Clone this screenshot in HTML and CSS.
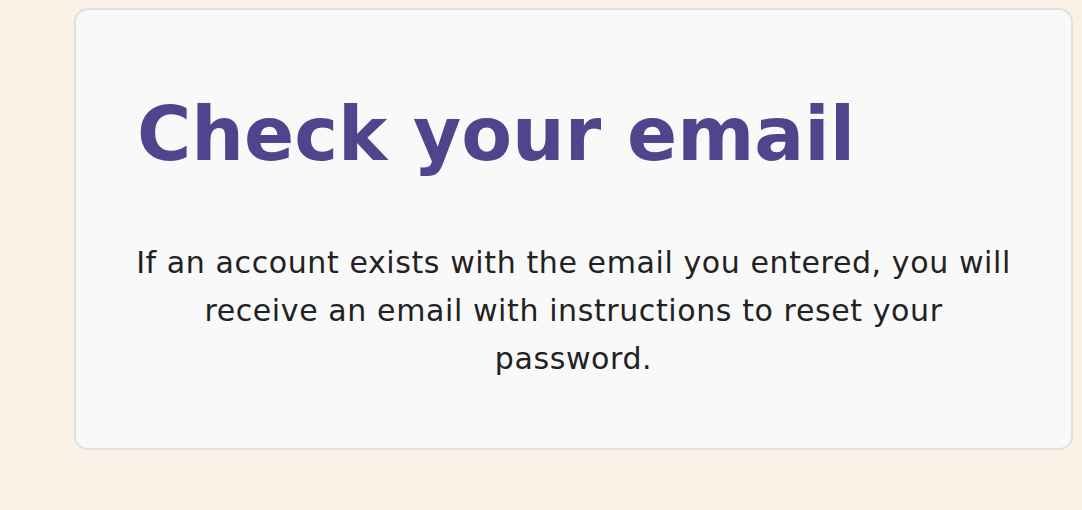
FILE: index.html
```html
<!DOCTYPE html>
<html lang="en">
<head>
<meta charset="utf-8">
<title>Check your email</title>
<link rel="stylesheet" href="styles.css">
</head>
<body>
<main class="page">
  <section class="card">
    <h1 class="title">Check your email</h1>
    <p class="message">If an account exists with the email you entered, you will receive an email with instructions to reset your password.</p>
  </section>
</main>
</body>
</html>
```
FILE: styles.css
```css
html, body {
  margin: 0;
  padding: 0;
  background: #faf2e7;
}
.page {
  padding: 8px 9px 0 74px;
}
.card {
  box-sizing: border-box;
  width: 999px;
  height: 442px;
  background: #f9f9f9;
  border: 2px solid #e0e0e0;
  border-radius: 14px;
  padding: 79px 54px 0 54px;
}
.title {
  margin: 0 0 0 7px;
  font-family: "DejaVu Sans", sans-serif;
  font-weight: 700;
  font-size: 74px;
  line-height: 90px;
  color: #52448c;
  letter-spacing: 0;
}
.message {
  margin: 60px 0 0 0;
  font-family: "DejaVu Sans", sans-serif;
  font-size: 30px;
  line-height: 48px;
  letter-spacing: 0.6px;
  color: #222222;
  text-align: center;
}
```
